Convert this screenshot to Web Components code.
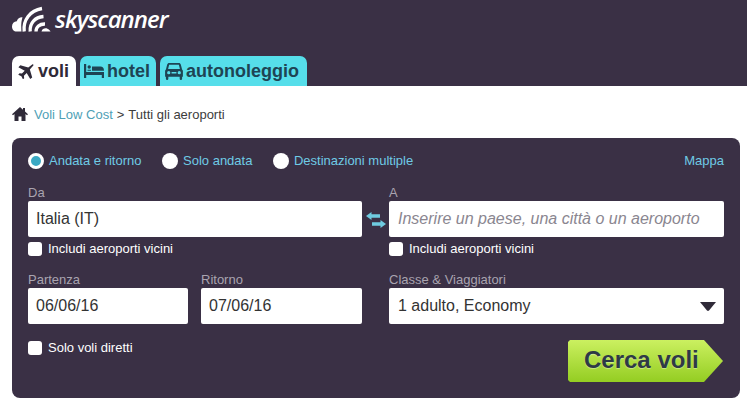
<!DOCTYPE html>
<html lang="it"><head><meta charset="utf-8"><title>Skyscanner</title>
<style>
html,body{margin:0;padding:0;background:#fff;font-family:"Liberation Sans",Arial,sans-serif}
</style></head><body>
<sky-header></sky-header>
<sky-breadcrumb></sky-breadcrumb>
<sky-search></sky-search>
<template id="t-header"><style>
:host{display:flex;flex-direction:column;height:86px;background:#3a3045;box-sizing:border-box;padding:5px 0 0 12px;font-family:"Liberation Sans",sans-serif}
.logo{display:flex;align-items:center;height:30px;color:#fff}
.logo svg{width:41px;height:28px;flex:none}
.logo span{font:italic 600 24px/30px "Open Sans",sans-serif;letter-spacing:-.95px;margin-left:2px;margin-top:-3px}
nav{display:flex;gap:4px;margin-top:auto}
</style><div class="logo"><svg viewBox="0 0 41 28"><path fill="#fff" d="M0 20.500C0 17.500 2 15.500 4.800 15.300 5.600 12.500 8 11 10.500 11.300 9.500 14.500 9 18 9.300 22.500c0 .7.100 2.500.2 3H4.500C2 25.500 0 23.500 0 20.500z"/><g fill="none" stroke="#fff" stroke-width="3.300"><path d="M12.200 25.500C10.800 14 18 4.500 30 2.500"/><path d="M18.200 25.500C17.500 17 23 11.200 31.500 10.500"/><path d="M24 25.500C24 21 27.500 17.800 33 18"/></g><path fill="#fff" d="M29.500 25.500c.6-2.400 3.400-3.800 5.900-2.800 1.500.6 2.600 1.600 3.100 2.800z"/></svg><span>skyscanner</span></div>
<nav><sky-tab active icon="plane">voli</sky-tab><sky-tab icon="bed">hotel</sky-tab><sky-tab icon="car">autonoleggio</sky-tab></nav></template>
<template id="t-tab"><style>
:host{display:flex;align-items:center;height:30px;box-sizing:border-box;padding:0 6px 0 4px;gap:3px;background:#56deea;border-radius:7px 7px 0 0;color:#1e4454;font:bold 18px/28px "Liberation Sans",sans-serif}
:host([active]){background:#fff;color:#2f2a38;padding:0 7px 0 5px;gap:4px}
:host([icon=car]){padding:0 8px 0 5px}
svg{flex:none;display:block}
#i{display:block}
</style><span id="i"></span><slot></slot></template>
<template id="t-crumb"><style>
:host{display:flex;align-items:center;height:52px;padding:5px 0 0 12px;box-sizing:border-box;font:13px/16px "Liberation Sans",sans-serif;color:#3c3c3c}
svg{width:16px;height:14px;margin-right:6px;flex:none;margin-top:-1px}
a{color:#4f9fb6;text-decoration:none;margin-right:4px}
b{font-weight:400;margin-right:4px}
</style><svg viewBox="0 0 16 14"><path fill="#2f2a38" d="M8 0 0 7.200 1 8.200 2.500 7v7h4V9.500h3V14h4V7L15 8.200l1-1-3-2.700V1h-2v1.700z"/></svg><a>Voli Low Cost</a><b>&gt;</b><span>Tutti gli aeroporti</span></template>
<template id="t-search"><style>
:host{display:block;width:728px;margin-left:12px;box-sizing:border-box;padding:15px 16px 16px;background:#3a3045;border-radius:8px;font:13px/16px "Liberation Sans",sans-serif}
.top{display:flex;align-items:center;height:16px}
.top sky-radio{margin-right:20.5px}
.top a{margin-left:auto;color:#6fcbe6}
.grid{display:grid;grid-template-columns:334px 27px 335px;margin-top:16px}
.dates{display:grid;grid-template-columns:160px 161px;column-gap:13px}
.swap{display:flex;justify-content:center;align-items:center;height:36px;margin-top:16px}
.swap svg{width:20px;height:16px;margin-top:1px}
.r2{margin-top:16px}
.bottom{display:flex;justify-content:space-between;align-items:flex-start;margin-top:16px;padding-right:1px}
</style><div class="top"><sky-radio on>Andata e ritorno</sky-radio><sky-radio>Solo andata</sky-radio><sky-radio>Destinazioni multiple</sky-radio><a>Mappa</a></div>
<div class="grid"><div><sky-field label="Da">Italia (IT)</sky-field><sky-check near>Includi aeroporti vicini</sky-check></div>
<div class="swap"><svg viewBox="0 0 20 16"><path fill="#6fcbe0" d="M0 4 5.500 0v2.200H14v3.600H5.500V8zM20 12 14.500 8v2.200H6v3.600h8.500V16z"/></svg></div>
<div><sky-field label="A" placeholder>Inserire un paese, una città o un aeroporto</sky-field><sky-check near>Includi aeroporti vicini</sky-check></div>
<div class="dates r2"><sky-field label="Partenza">06/06/16</sky-field><sky-field label="Ritorno">07/06/16</sky-field></div><div></div>
<div class="r2"><sky-field label="Classe &amp; Viaggiatori" select>1 adulto, Economy</sky-field></div></div>
<div class="bottom"><sky-check>Solo voli diretti</sky-check><sky-button>Cerca voli</sky-button></div></template>
<template id="t-radio"><style>
:host{display:inline-flex;align-items:center;gap:5px;color:#6fcbe6;font:13px/16px "Liberation Sans",sans-serif}
i{width:16px;height:16px;border-radius:50%;background:#fff;box-sizing:border-box;display:block}
:host([on]) i{background:#3ba9c4;border:3px solid #fff}
</style><i></i><slot></slot></template>
<template id="t-check"><style>
:host{display:flex;align-items:center;gap:6px;color:#fff;font:13px/15px "Liberation Sans",sans-serif;height:15px}
:host([near]){margin-top:4px}
i{width:14px;height:14px;border-radius:3px;background:#fff;display:block}
</style><i></i><slot></slot></template>
<template id="t-field"><style>
:host{display:block;font-family:"Liberation Sans",sans-serif}
label{display:block;height:16px;font:13px/16px "Liberation Sans",sans-serif;color:#a9a4b0}
div{display:flex;align-items:center;justify-content:space-between;height:36px;box-sizing:border-box;padding:1px 8px 1px 8px;background:#fff;border-radius:2px;color:#333;font-size:16px;white-space:nowrap}
:host([placeholder]) div{font-style:italic;color:#8a8690;padding-left:9px}
:host([select]) div{padding-left:9px}
svg{width:16px;height:9px;margin-top:1px}
</style><label></label><div><span><slot></slot></span></div></template>
<template id="t-button"><style>
:host{display:block;width:155px;height:42px;font:bold 24px/40px "Liberation Sans",sans-serif;color:#2e3a46}
div{height:100%;box-sizing:border-box;padding-left:16px;background:linear-gradient(#cbf060,#94cd22);clip-path:polygon(2px 0,136px 0,155px 21px,136px 42px,2px 42px,0 40px,0 2px);text-shadow:0 1px 1px rgba(255,255,255,.4)}
</style><div><slot></slot></div></template>
<script>
const icons={
plane:'<svg width="17" height="15" viewBox="0 0 21 19"><path fill="#2f2a38" d="M19 .5c1.200-.6 2 .3 1.400 1.500L16 7l3 10-2.500 2-4.500-7.500-3.500 3.500.3 3-1.500 1.500-2-4-4-2L3 11.800l3 .3 3.500-3.500L1.500 4 4 1.500 14 4.500z"/></svg>',
bed:'<svg width="20" height="14" viewBox="0 0 20 14"><path fill="#1e4454" d="M0 0h2.200v8H20v6h-2.200v-3H2.200v3H0zM3.500 3a1.700 1.700 0 1 1 3.400 0 1.700 1.700 0 0 1-3.400 0zM8 2.500h8.500c2 0 3.500 1.200 3.500 4.300H8zM3.500 5.700h3.500v1.100H3.500z"/></svg>',
car:'<svg width="18" height="17" viewBox="0 0 22 21"><path fill="#1e4454" fill-rule="evenodd" d="M5 0h12c1.300 0 2 .8 2.400 2L21 8c.7.500 1 1.200 1 2v7h-1v2.500a1.500 1.500 0 0 1-3 0V17H4v2.500a1.500 1.500 0 0 1-3 0V17H0v-7c0-.8.300-1.500 1-2l1.600-6C3 .8 3.700 0 5 0zM5 2.300 3.700 7.500h14.600L17 2.300zM4.500 10a2 2 0 1 0 0 4 2 2 0 0 0 0-4zm13 0a2 2 0 1 0 0 4 2 2 0 0 0 0-4zM8 11v2h6v-2z"/></svg>'};
function def(name,tpl,init){customElements.define(name,class extends HTMLElement{constructor(){super();this.attachShadow({mode:'open'}).appendChild(document.getElementById(tpl).content.cloneNode(true));}connectedCallback(){init&&init.call(this,this.shadowRoot)}})}
def('sky-header','t-header');
def('sky-tab','t-tab',function(r){const s=r.getElementById('i');if(s)s.innerHTML=icons[this.getAttribute('icon')]});
def('sky-breadcrumb','t-crumb');
def('sky-search','t-search');
def('sky-radio','t-radio');
def('sky-check','t-check');
def('sky-field','t-field',function(r){r.querySelector('label').textContent=this.getAttribute('label');if(this.hasAttribute('select')){r.querySelector('div').insertAdjacentHTML('beforeend','<svg viewBox="0 0 16 9"><path fill="#2f2a38" d="M0 0h16L9 8.500Q8 9.300 7 8.500z"/></svg>')}});
def('sky-button','t-button');
</script>
</body></html>
